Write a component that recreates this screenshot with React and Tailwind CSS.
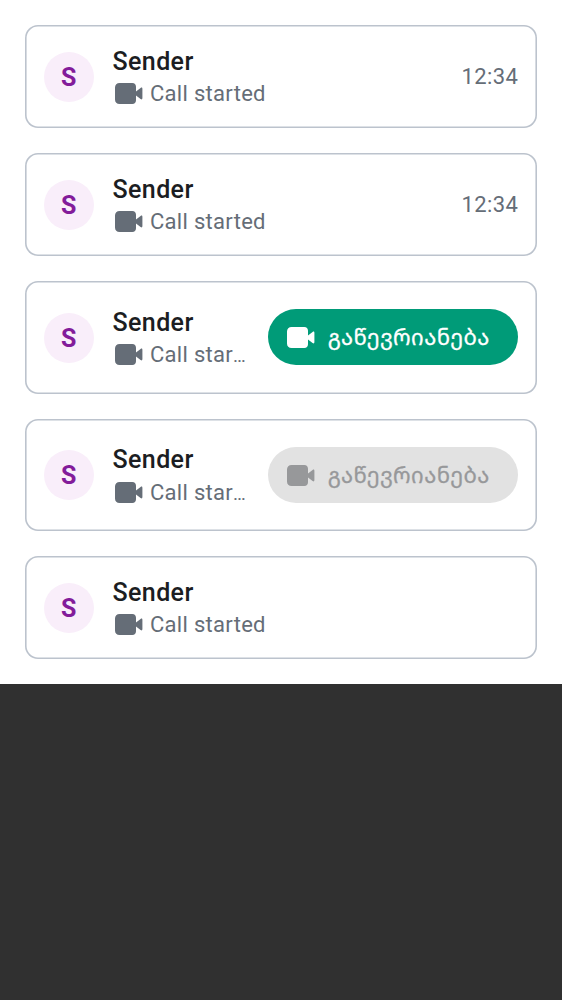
function VideoIcon({ className }) {
  return (
    <svg className={className} width="28" height="21" viewBox="0 0 28 21" fill="currentColor" aria-hidden="true">
      <path d="M4.6 0H17.3C19.6 0 21 1.4 21 3.7V8.6L25.6 4.9C26.6 4.1 27.4 4.6 27.4 5.9V15.1C27.4 16.4 26.6 16.9 25.6 16.1L21 12.4V17.3C21 19.6 19.6 21 17.3 21H4.6C1.8 21 0 19.2 0 16.4V4.6C0 1.8 1.8 0 4.6 0Z" />
    </svg>
  );
}

function JoinButton({ disabled }) {
  return (
    <button
      disabled={disabled}
      className={`flex h-[56px] w-[250px] shrink-0 items-center rounded-full pl-[18.5px] ${
        disabled ? "bg-[#e2e2e2] text-[#97989a]" : "mb-px bg-[#009b78] text-white"
      }`}
    >
      <VideoIcon className="shrink-0" />
      <span className="ml-[13px] whitespace-nowrap font-['Noto_Sans_Georgian','DejaVu_Sans',sans-serif] text-[22px] leading-8 tracking-[0.42px] [-webkit-text-stroke:0.3px_currentColor]">
        გაწევრიანება
      </span>
    </button>
  );
}

function CallCard({ time, action, className }) {
  return (
    <article className={`flex items-center rounded-[13px] pl-[18.7px] pr-[18.7px] shadow-[inset_0_0_0_1.6px_#bcc3cd] ${className}`}>
      <div className="flex size-[50px] shrink-0 items-center justify-center rounded-full bg-[#f9eefa] pt-[2px] text-[25px] font-bold text-[#831c9a]">
        S
      </div>
      <div className="ml-[18.8px] min-w-0 flex-1 pb-[2px]">
        <h2 className="pt-[0.5px] text-[25px] font-medium leading-[35.5px] tracking-[0.4px] text-[#1b1d22]">Sender</h2>
        <div className="flex items-center text-[#656d77]">
          <VideoIcon className="ml-[2.5px] shrink-0" />
          <span className="ml-[7px] whitespace-nowrap text-[22px] leading-[29px] tracking-[0.3px]">
            {action ? "Call star" : "Call started"}
            {action && <span className="text-[19px] leading-none">…</span>}
          </span>
        </div>
      </div>
      {time && <time className="text-[22px] leading-[31px] tracking-[0.4px] text-[#656d77]">{time}</time>}
      {action && <JoinButton disabled={action === "disabled"} />}
    </article>
  );
}

export default function App() {
  return (
    <div className="min-h-screen bg-[#303030] font-['Roboto',sans-serif]">
      <main className="flex h-[684px] flex-col gap-[25px] bg-white p-[25px]">
        <CallCard time="12:34" className="h-[103px]" />
        <CallCard time="12:34" className="h-[103px]" />
        <CallCard action="enabled" className="h-[113px]" />
        <CallCard action="disabled" className="h-[112px]" />
        <CallCard className="h-[103px]" />
      </main>
    </div>
  );
}
